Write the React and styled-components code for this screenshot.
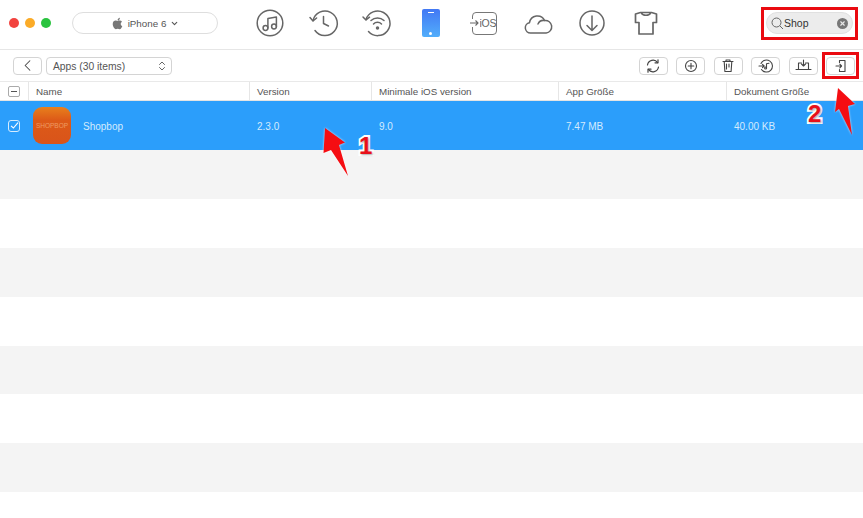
import React from 'react'
import styled, { createGlobalStyle } from 'styled-components'
import { FaApple } from 'react-icons/fa'
import { ChevronDown, ChevronLeft, ChevronsUpDown, X } from 'lucide-react'

const COLUMNS = '28px 221px 122px 187px 168px 1fr'

const Global = createGlobalStyle`
  html, body { margin: 0; padding: 0; background: #fff; }
  body { font-family: "Liberation Sans", Arial, sans-serif; color: #555; }
`

const Line = ({ children, size = 32, view = 32, stroke = 1.5 }) => (
    <svg width={size} height={size} viewBox={`0 0 ${view} ${view}`} fill="none" stroke="currentColor" strokeWidth={stroke} strokeLinecap="round" strokeLinejoin="round">
        {children}
    </svg>
)

const topIcons = [
    <Line key="music"><circle cx="16" cy="16" r="12.8" /><circle cx="11.5" cy="21" r="2.4" /><circle cx="20" cy="19.5" r="2.4" /><path d="M13.9 21V11.5L22.4 10v9.5" /></Line>,
    <Line key="history"><path d="M5 13.5A12.3 12.3 0 1 1 7 23.5" /><path d="M2 10.5l3 3.5 3.6-3" /><path d="M15.5 9.5V16.5l5 2.5" /></Line>,
    <Line key="wifi"><path d="M5 12.5A12.3 12.3 0 1 1 7.5 24.5" /><path d="M2 10l3 3 3.5-2.8" /><path d="M10 13.5a9.5 9.5 0 0 1 13 0M12.5 17a5.5 5.5 0 0 1 8 0" /><circle cx="16.5" cy="21" r="1" fill="currentColor" /></Line>,
    null,
    null,
    <Line key="cloud"><path d="M8.5 26a5.2 5.2 0 0 1-1-10.3A8 8 0 0 1 22.6 13.5a6.3 6.3 0 0 1 1.6 12.5z" /><path d="M16 17a6 6 0 0 1 6.5-3.5" /></Line>,
    <Line key="download"><circle cx="16" cy="16" r="12" /><path d="M16 9v14M11 18.5l5 5 5-5" /></Line>,
    <Line key="shirt" stroke={1.7}><path d="M10.5 5.5h11l5 1.5v8.5h-3.5V27H9V15.5H5.5V7z" /><path d="M11.5 6c1 3 8 3 9 0" /></Line>,
]

const actionIcons = [
    <Line key="sync" size={16} view={16} stroke={1.2}><path d="M2.5 7A5.6 5.6 0 0 1 12.6 4.6M13.5 9A5.6 5.6 0 0 1 3.4 11.4" /><path d="M13 1.8v3h-3M3 14.2v-3h3" /></Line>,
    <Line key="add" size={16} view={16} stroke={1.1}><circle cx="8" cy="8" r="5.5" /><path d="M8 5.2v5.6M5.2 8h5.6" /></Line>,
    <Line key="trash" size={16} view={16} stroke={1.1}><path d="M3 3.5h10M6 3.5V2h4v1.5M4.2 3.5l.7 10h6.2l.7-10" /><path d="M6.5 6v5M9 6v3" /></Line>,
    <Line key="tune" size={16} view={16} stroke={1.1}><path d="M3 5.5A6 6 0 1 1 3.5 11.5" /><path d="M1 8h5M4.5 6.4 6.2 8 4.5 9.6" /><path d="M8.5 10V5.8l2.5-.6" /><circle cx="7.6" cy="10" r="1" /></Line>,
    <Line key="laptop" size={17} view={17} stroke={1.1}><path d="M3.5 12V6h3M13.5 12V6h-3M1 12.5h15" /><path d="M8.5 3v6M6.5 7l2 2 2-2" /></Line>,
    <Line key="exit" size={16} view={16} stroke={1.1}><path d="M6.5 4.5V2.5h5.5v11H6.5v-2" /><path d="M3 8h5.5M6.8 6.2 8.6 8l-1.800 1.800" /></Line>,
]

const columns = ['Name', 'Version', 'Minimale iOS version', 'App Größe', 'Dokument Größe']
const selected = ['2.3.0', '9.0', '7.47 MB', '40.00 KB']
const emptyRows = [0, 1, 2, 3, 4, 5, 6, 7]

const App = () => {
    return <Window>
        <Global />
        <TitleBar>
            <Lights>
                <Light color="#f2433f" />
                <Light color="#fbab27" />
                <Light color="#2ac33f" />
            </Lights>
            <DevicePill>
                <FaApple size={13} color="#777" />
                <span>iPhone 6</span>
                <ChevronDown size={9} strokeWidth={3} />
            </DevicePill>
            <Nav>
                {topIcons.map((icon, i) => (
                    <NavItem key={i}>
                        {i === 3 && <Phone><PhoneSpeaker /><PhoneHome /></Phone>}
                        {i === 4 && <IosBox>
                            <IosArrow width="10" height="8" viewBox="0 0 10 8" fill="none" stroke="#666" strokeWidth="1.1"><path d="M0 4h8M5.5 1.5 8 4 5.500 6.500" /></IosArrow>
                            <span>iOS</span>
                        </IosBox>}
                        {icon}
                    </NavItem>
                ))}
            </Nav>
            <Search>
                <svg width="13" height="13" viewBox="0 0 13 13" fill="none" stroke="#666" strokeWidth="1">
                    <circle cx="5.5" cy="5.5" r="4.5" />
                    <path d="M8.8 8.8 12 12" />
                </svg>
                <SearchText>Shop</SearchText>
                <ClearButton><X size={7} strokeWidth={4} color="#e8e8e8" /></ClearButton>
            </Search>
        </TitleBar>
        <Toolbar>
            <BackButton><ChevronLeft size={19} strokeWidth={1.3} /></BackButton>
            <Select>
                <SelectLabel>Apps (30 items)</SelectLabel>
                <ChevronsUpDown size={12} strokeWidth={1.8} />
            </Select>
            <Actions>
                {actionIcons.map((icon, i) => <ActionButton key={i}>{icon}</ActionButton>)}
            </Actions>
        </Toolbar>
        <HeaderRow>
            <HeaderCell><MinusBox /></HeaderCell>
            {columns.map(c => <HeaderCell key={c}>{c}</HeaderCell>)}
        </HeaderRow>
        <SelectedRow>
            <CheckCell>
                <CheckBox>
                    <svg width="9" height="9" viewBox="0 0 9 9" fill="none" stroke="#fff" strokeWidth="1.1"><path d="M1 4.8 3.4 7 8 1.6" /></svg>
                </CheckBox>
            </CheckCell>
            <NameCell>
                <AppIcon><AppLabel>SHOPBOP</AppLabel></AppIcon>
                <AppName>Shopbop</AppName>
            </NameCell>
            {selected.map(v => <ValueCell key={v}>{v}</ValueCell>)}
        </SelectedRow>
        {emptyRows.map(i => <EmptyRow key={i} $odd={i % 2 === 0} />)}

        <RedBox $top={7} $left={761} $width={97} $height={33} />
        <RedBox $top={52} $left={822} $width={37} $height={27} />
        <Arrow $top={125} $left={320} width={32} height={54} viewBox="320 125 32 54">
            <path d="M325 128 345 142.5 339 145 348 176 331 150 323.5 153z" fill="#f50d12" />
        </Arrow>
        <Arrow $top={85} $left={831} width={28} height={54} viewBox="831 85 28 54">
            <path d="M838 88 855 104 848 106 852 135 839 109 835 112z" fill="#f50d12" />
        </Arrow>
        <Callout $top={133} $left={359}>1</Callout>
        <Callout $top={101} $left={808}>2</Callout>
    </Window>
}

const Window = styled.div`
    position: relative;
    width: 863px;
    height: 518px;
    overflow: hidden;
    background: #fff;
`

const TitleBar = styled.div`
    height: 46px;
    display: flex;
    align-items: center;
    padding: 0 0 3px 9px;
    border-bottom: 1px solid #e6e6e6;
`

const Lights = styled.div`
    display: flex;
    gap: 6px;
    margin-right: 21px;
`

const Light = styled.div`
    width: 10px;
    height: 10px;
    border-radius: 50%;
    background: ${p => p.color};
`

const DevicePill = styled.div`
    box-sizing: border-box;
    width: 146px;
    height: 22px;
    border: 1px solid #dedede;
    border-radius: 11px;
    display: flex;
    align-items: center;
    justify-content: center;
    gap: 4px;
    font-size: 9.8px;
    color: #555;
`

const Nav = styled.div`
    display: flex;
    margin-left: 25px;
    width: 430px;
`

const NavItem = styled.div`
    width: 53.7px;
    height: 32px;
    display: flex;
    align-items: center;
    justify-content: center;
    color: #666;
`

const Phone = styled.div`
    box-sizing: border-box;
    width: 18px;
    height: 28px;
    border-radius: 2px;
    background: linear-gradient(#4278f4, #52aefb);
    display: flex;
    flex-direction: column;
    align-items: center;
    justify-content: space-between;
    padding: 3px 0 2px;
`

const PhoneSpeaker = styled.div`
    width: 6px;
    height: 1px;
    background: #fff;
`

const PhoneHome = styled.div`
    width: 3px;
    height: 3px;
    border-radius: 50%;
    background: #fff;
`

const IosBox = styled.div`
    box-sizing: border-box;
    position: relative;
    width: 25px;
    height: 23px;
    border: 1.5px solid #777;
    border-radius: 4px;
    display: flex;
    align-items: center;
    justify-content: flex-end;
    font-size: 10.5px;
    color: #666;
    letter-spacing: -0.3px;
`

const IosArrow = styled.svg`
    position: absolute;
    left: -3px;
    top: 6px;
    background: #fff;
`

const Search = styled.div`
    box-sizing: border-box;
    margin-left: auto;
    margin-right: 10px;
    width: 87px;
    height: 22px;
    border-radius: 11px;
    background: #ececec;
    border: 1px solid #e0e0e0;
    display: flex;
    align-items: center;
    padding: 0 4px;
`

const SearchText = styled.span`
    font-size: 10.5px;
    color: #333;
    flex: 1;
`

const ClearButton = styled.div`
    width: 11px;
    height: 11px;
    border-radius: 50%;
    background: #777;
    display: flex;
    align-items: center;
    justify-content: center;
`

const Toolbar = styled.div`
    height: 31px;
    display: flex;
    align-items: center;
    padding: 0 8px 0 13px;
    border-bottom: 1px solid #e9e9e9;
`

const Button = styled.div`
    box-sizing: border-box;
    width: 29px;
    height: 18px;
    border: 1px solid #d4d4d4;
    border-radius: 4px;
    display: flex;
    align-items: center;
    justify-content: center;
    color: #444;
    background: #fff;
`

const BackButton = styled(Button)`
    margin-right: 4px;
`

const Select = styled(Button)`
    width: 126px;
    justify-content: space-between;
    padding: 0 3px 0 6px;
    font-size: 10.3px;
    color: #555;
`

const SelectLabel = styled.span`
    padding-top: 1px;
`

const Actions = styled.div`
    margin-left: auto;
    display: flex;
    gap: 8.5px;
`

const ActionButton = styled(Button)`
    svg { display: block; }
`

const HeaderRow = styled.div`
    display: grid;
    grid-template-columns: ${COLUMNS};
    height: 18px;
    border-bottom: 1px solid #e4e4e4;
`

const HeaderCell = styled.div`
    display: flex;
    align-items: center;
    padding-left: 7px;
    font-size: 9.8px;
    color: #555;
    border-left: 1px solid #e6e6e6;
    &:first-child { border-left: 0; padding-left: 8px; }
`

const MinusBox = styled.div`
    box-sizing: border-box;
    width: 12px;
    height: 11px;
    border: 1px solid #aaa;
    border-radius: 2px;
    position: relative;
    &::after {
        content: '';
        position: absolute;
        left: 2px;
        right: 2px;
        top: 4px;
        height: 1px;
        background: #555;
    }
`

const SelectedRow = styled.div`
    display: grid;
    grid-template-columns: ${COLUMNS};
    height: 49px;
    align-items: center;
    background: #2b9efb;
    color: #d4ebfd;
    font-size: 10px;
`

const CheckCell = styled.div`
    padding-left: 8px;
`

const CheckBox = styled.div`
    box-sizing: border-box;
    width: 12px;
    height: 12px;
    border: 1px solid #d6ecfe;
    border-radius: 3px;
    display: flex;
    align-items: center;
    justify-content: center;
`

const NameCell = styled.div`
    display: flex;
    align-items: center;
    gap: 12px;
    padding-left: 5px;
`

const AppIcon = styled.div`
    width: 38px;
    height: 37px;
    border-radius: 9px;
    background: linear-gradient(#e8801c, #dd5a18 35%, #d9541a);
    display: flex;
    align-items: center;
    justify-content: center;
`

const AppLabel = styled.span`
    font-size: 6.5px;
    color: #ee9a62;
`

const AppName = styled.span`
    padding-top: 2px;
`

const ValueCell = styled.div`
    padding: 2px 0 0 8px;
`

const EmptyRow = styled.div`
    height: 48.9px;
    background: ${p => (p.$odd ? '#f4f4f4' : '#fff')};
`

const RedBox = styled.div`
    position: absolute;
    box-sizing: border-box;
    top: ${p => p.$top}px;
    left: ${p => p.$left}px;
    width: ${p => p.$width}px;
    height: ${p => p.$height}px;
    border: 3px solid #ea0a10;
`

const Arrow = styled.svg`
    position: absolute;
    top: ${p => p.$top}px;
    left: ${p => p.$left}px;
    filter: drop-shadow(0 0 1px rgba(255, 255, 255, 0.8));
`

const Callout = styled.span`
    position: absolute;
    top: ${p => p.$top}px;
    left: ${p => p.$left}px;
    font-size: 24px;
    font-weight: 700;
    line-height: 26px;
    color: #e8101a;
    -webkit-text-stroke: 4px #fff;
    paint-order: stroke fill;
    text-shadow: 1px 1px 2px rgba(0, 0, 0, 0.35);
`

export default App
